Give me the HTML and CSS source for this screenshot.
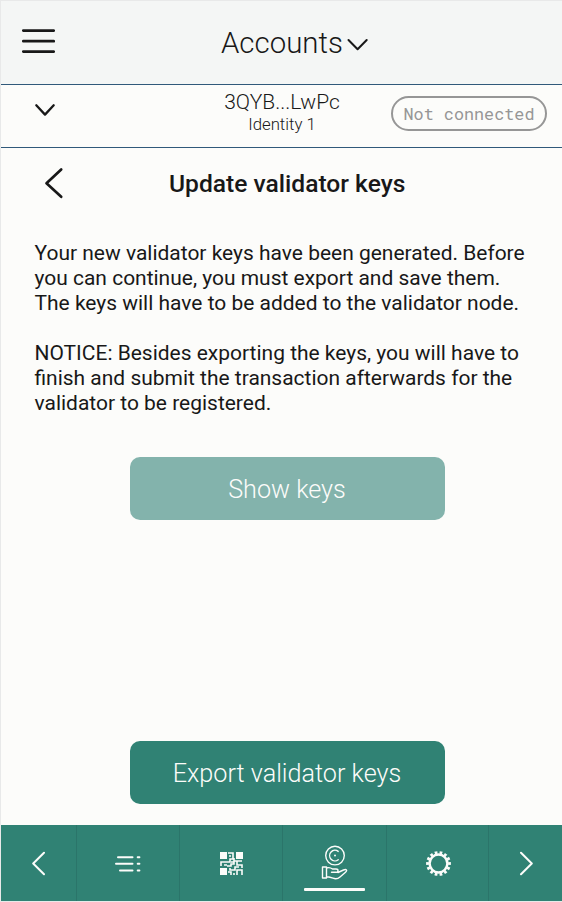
FILE: index.html
```html
<!DOCTYPE html>
<html lang="en">
<head>
<meta charset="utf-8">
<title>Update validator keys</title>
<link rel="stylesheet" href="styles.css">
</head>
<body>
<div class="app">
  <header class="header">
    <svg class="menu" width="34" height="26" viewBox="0 0 34 26"><path d="M2.3 2.6H32.7M2.3 13.2H32.7M2.3 23.6H32.7"/></svg>
    <h1><span class="accounts">Accounts</span><svg width="22" height="14" viewBox="0 0 22 14"><path d="M1.5 2L10.6 11.3L19.7 2"/></svg></h1>
  </header>
  <section class="account">
    <svg class="expand" width="22" height="14" viewBox="0 0 22 14"><path d="M2.3 2.3L11 11.6L19.7 2.3"/></svg>
    <div class="identity"><span class="address">3QYB...LwPc</span><span class="name">Identity 1</span></div>
    <div class="status"><span>Not connected</span></div>
  </section>
  <main>
    <div class="title">
      <svg width="22" height="32" viewBox="0 0 22 32"><path d="M19.2 2.5L4.5 16.3L19.2 29.8"/></svg>
      <h2><span>Update validator keys</span></h2>
    </div>
    <div class="copy">
      <p><span>Your new validator keys have been generated. Before</span><br><span>you can continue, you must export and save them.</span><br><span>The keys will have to be added to the validator node.</span></p>
      <p><span>NOTICE: Besides exporting the keys, you will have to</span><br><span>finish and submit the transaction afterwards for the</span><br><span>validator to be registered.</span></p>
    </div>
    <button class="button muted"><span>Show keys</span></button>
    <button class="button export"><span>Export validator keys</span></button>
  </main>
  <nav>
    <div class="tab"><svg width="14" height="26" viewBox="0 0 14 26"><path d="M12 2.7L1.2 13.5L12 24.2"/></svg></div>
    <div class="tab"><svg width="28" height="20" viewBox="0 0 28 20"><path d="M4 4.3H18.5M2 10.8H18.5M6 17.4H18.5M23.7 4.3H25.4M23.7 10.8H25.4M23.7 17.4H25.4"/></svg></div>
    <div class="tab"><svg class="qr" width="23" height="23" viewBox="0 0 23 23"><path class="solid" d="M0 0H7V7H0ZM16 0H23V7H16ZM0 16H7V23H0Z"/><path d="M8 1H13V7H10V10H1V14M4 13H7M9 4H11M14 6V9H18M22 9H17V13H22V16M7 14H11V12H14V10H11M10 16V18H15V15H19M8 20H11V23M14 21V23M17 23V18H22V23"/></svg></div>
    <div class="tab active"><svg class="coin" width="27" height="36" viewBox="0 0 27 36"><circle cx="14" cy="10.6" r="9.3"/><path d="M17.2 6.4A5.3 5.3 0 1 0 17.2 14.8"/><circle class="solid" cx="14" cy="10.6" r="1"/><path d="M1.5 22H5.5V33H1.5ZM5.5 23C8.5 22 9.5 22.5 11.5 24H15C17.7 24 17.7 27.3 15 27.3H10.5M17 27.5L22.5 25C25.4 23.7 26.6 25.3 24.5 27.2L19 32C17.3 33.5 14.5 34.1 12 33.2L8 32H5.5"/></svg><i></i></div>
    <div class="tab"><svg class="gear" width="27" height="27" viewBox="-13.5 -13.5 27 27"><circle class="ring" r="8.9"/><circle class="teeth" r="11" pathLength="140"/></svg></div>
    <div class="tab"><svg width="14" height="26" viewBox="0 0 14 26"><path d="M2 2.7L12.8 13.5L2 24.2"/></svg></div>
  </nav>
</div>
</body>
</html>
```
FILE: styles.css
```css
* { box-sizing: border-box; }
body { margin: 0; font-family: Roboto, sans-serif; color: #181818; background: #fcfcfa; }
.app { width: 562px; height: 902px; display: flex; flex-direction: column; border: 1px solid #e8e9e9; border-right: 0; }
svg { display: block; fill: none; stroke: #181818; stroke-width: 2.3; stroke-linecap: round; stroke-linejoin: round; flex: none; }
span { white-space: nowrap; }
h1, h2, p { margin: 0; font-weight: 400; }
.header { height: 84px; flex: none; display: grid; grid-template-columns: 220px 1fr; align-items: center; border-bottom: 1px solid #30597a; background: #f4f6f5; }
.menu { margin: -3px 0 0 20px; stroke-width: 2.7; }
h1 { display: flex; align-items: center; gap: 4px; font-size: 29.4px; line-height: 36px; font-weight: 300; }
h1 svg { stroke-width: 2; margin-top: 4px; }
.account { height: 63px; flex: none; display: grid; grid-template-columns: 220px 122px 1fr; border-bottom: 1px solid #30597a; }
.expand { margin: 18px 0 0 33px; }
.identity { display: flex; flex-direction: column; align-items: center; padding-top: 5px; font-weight: 300; }
.address { font-size: 21px; line-height: 24px; }
.name { font-size: 16.8px; line-height: 20px; }
.status { width: 156px; height: 35px; margin: 11px 0 0 48px; border: 2px solid #969696; border-radius: 18px; color: #969696; display: flex; align-items: center; justify-content: center; font: 16.8px/20px "Roboto Mono", "Liberation Mono", monospace; }
main { flex: 1; display: flex; flex-direction: column; align-items: flex-start; }
.title { height: 93px; display: grid; grid-template-columns: 168px 1fr; padding-top: 19px; }
.title svg { margin-left: 41px; stroke-width: 2.7; }
h2 { font-size: 24.6px; line-height: 34px; font-weight: 500; }
.copy { margin-left: 33.5px; font-size: 20.97px; line-height: 25px; }
.copy p + p { margin-top: 25px; }
.button { width: 315px; height: 63px; margin: 41px 0 0 129px; padding: 2px 1px 0 0; border: 0; border-radius: 10px; background: #308274; color: #fcfcfa; font: 300 25.2px/32px Roboto, sans-serif; }
.muted { background: #83b3ac; }
.export { margin-top: auto; margin-bottom: 21px; }
nav { height: 76px; flex: none; display: grid; grid-template-columns: 75px 103px 103px 104px 102px 1fr; background: #308274; }
.tab { display: flex; align-items: center; justify-content: center; border-left: 1px solid #2b756a; position: relative; }
.tab:first-child { border-left: 0; }
nav svg { stroke: #fcfcfa; stroke-width: 2; }
nav .solid { fill: #fcfcfa; stroke: none; }
nav .qr { stroke-width: 1.6; stroke-linecap: butt; stroke-linejoin: miter; }
nav .coin { stroke-width: 1.4; }
.active i { position: absolute; width: 61px; height: 3px; bottom: 10px; left: 21px; background: #fcfcfa; border-radius: 1px; }
.gear { margin-left: 2px; }
.ring { stroke-width: 2.5; }
.teeth { stroke-width: 2.8; stroke-dasharray: 5.5 4.5; stroke-dashoffset: 2.75; stroke-linecap: butt; }
```
